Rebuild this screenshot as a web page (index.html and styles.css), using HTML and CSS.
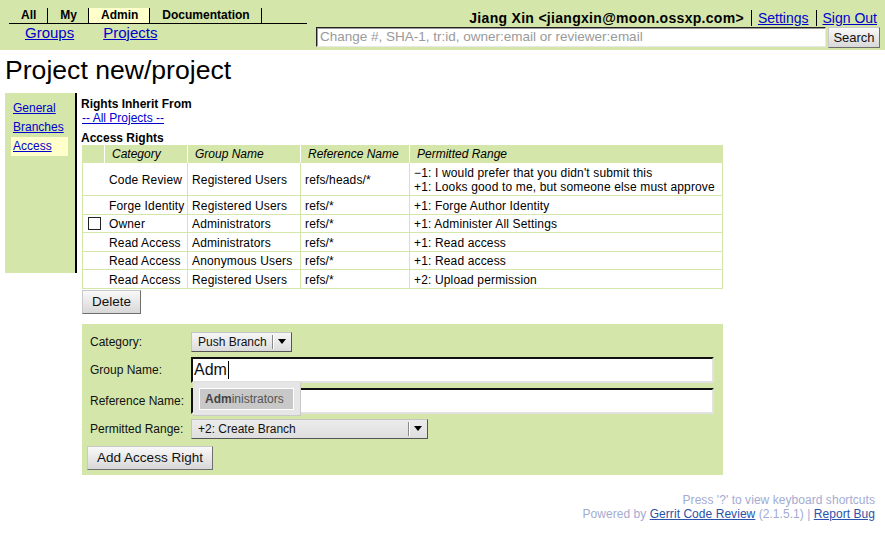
FILE: index.html
```html
<!DOCTYPE html>
<html>
<head>
<meta charset="utf-8">
<title>Project new/project</title>
<link rel="stylesheet" href="styles.css">
</head>
<body>
<div class="header">
  <div class="hleft">
    <div class="tabs">
      <span class="tab">All</span><span class="tab">My</span><span class="tab sel">Admin</span><span class="tab">Documentation</span>
    </div>
    <div class="sublinks"><a href="#">Groups</a><a href="#">Projects</a></div>
  </div>
  <div class="hright">
    <div class="userline"><span class="user">Jiang Xin &lt;jiangxin@moon.ossxp.com&gt;</span><span class="sep"></span><a href="#">Settings</a><span class="sep"></span><a href="#">Sign Out</a></div>
    <div class="searchrow">
      <div class="searchbox">Change #, SHA-1, tr:id, owner:email or reviewer:email</div>
      <button class="btn search">Search</button>
    </div>
  </div>
</div>

<h1 class="title">Project new/project</h1>

<div class="main">
  <div class="nav">
    <div class="navitem"><a href="#">General</a></div>
    <div class="navitem"><a href="#">Branches</a></div>
    <div class="navitem sel"><a href="#">Access</a></div>
  </div>
  <div class="content">
    <div class="sect">Rights Inherit From</div>
    <div class="inherit"><a href="#">-- All Projects --</a></div>
    <div class="sect sect2">Access Rights</div>
    <table class="rights">
      <colgroup><col class="w0"><col class="w1"><col class="w2"><col class="w3"><col class="w4"></colgroup>
      <tr><th class="c0"></th><th>Category</th><th>Group Name</th><th>Reference Name</th><th class="last">Permitted Range</th></tr>
      <tr><td class="c0"></td><td>Code Review</td><td>Registered Users</td><td>refs/heads/*</td><td>−1: I would prefer that you didn't submit this<br>+1: Looks good to me, but someone else must approve</td></tr>
      <tr><td class="c0"></td><td>Forge Identity</td><td>Registered Users</td><td>refs/*</td><td>+1: Forge Author Identity</td></tr>
      <tr><td class="c0"><span class="check"></span></td><td>Owner</td><td>Administrators</td><td>refs/*</td><td>+1: Administer All Settings</td></tr>
      <tr><td class="c0"></td><td>Read Access</td><td>Administrators</td><td>refs/*</td><td>+1: Read access</td></tr>
      <tr><td class="c0"></td><td>Read Access</td><td>Anonymous Users</td><td>refs/*</td><td>+1: Read access</td></tr>
      <tr><td class="c0"></td><td>Read Access</td><td>Registered Users</td><td>refs/*</td><td>+2: Upload permission</td></tr>
    </table>
    <button class="btn delete">Delete</button>

    <div class="addpanel">
      <div class="frow">
        <div class="flabel">Category:</div>
        <div class="combo small"><span class="ctext">Push Branch</span><span class="carrow"><span class="tri"></span></span></div>
      </div>
      <div class="frow">
        <div class="flabel">Group Name:</div>
        <div class="fieldwrap">
          <div class="tinput"><span class="typed">Adm</span><span class="caret"></span></div>
          <div class="suggest"><div class="sitem"><b>Adm</b>inistrators</div></div>
        </div>
      </div>
      <div class="frow">
        <div class="flabel">Reference Name:</div>
        <div class="tinput"></div>
      </div>
      <div class="frow">
        <div class="flabel">Permitted Range:</div>
        <div class="combo wide"><span class="ctext">+2: Create Branch</span><span class="carrow"><span class="tri"></span></span></div>
      </div>
      <div class="frow brow">
        <button class="btn addbtn">Add Access Right</button>
      </div>
    </div>
  </div>
</div>

<div class="footer">
  <div>Press '?' to view keyboard shortcuts</div>
  <div>Powered by <a href="#">Gerrit Code Review</a> (2.1.5.1) | <a href="#">Report Bug</a></div>
</div>
</body>
</html>
```

FILE: styles.css
```css
* { box-sizing: border-box; }
html, body { margin: 0; padding: 0; }
body {
  font-family: "Liberation Sans", Arial, sans-serif;
  font-size: 12px;
  color: #000;
  background: #fff;
  width: 885px;
}
a { color: #0000cc; text-decoration: underline; }

/* header */
.header {
  display: flex;
  justify-content: space-between;
  height: 50px;
  background: #d4e6a9;
}
.hleft { padding: 8px 0 0 9px; }
.tabs {
  display: flex;
  width: 298px;
  height: 16px;
  border-bottom: 1px solid #000;
}
.tab {
  font-weight: bold;
  font-size: 12px;
  line-height: 15px;
  height: 15px;
  padding: 0 11px 0 12px;
  border-right: 1px solid #000;
}
.tab.sel { background: #ffffcc; }
.sublinks {
  display: flex;
  gap: 29px;
  padding-left: 16px;
  font-size: 15px;
  line-height: 17px;
}
.hright {
  display: flex;
  flex-direction: column;
  align-items: flex-end;
  padding: 9px 5px 0 0;
}
.userline {
  display: flex;
  align-items: center;
  font-size: 14px;
  line-height: 16px;
  height: 17px;
  margin-right: 3px;
}
.user { font-weight: bold; letter-spacing: 0.3px; }
.sep {
  width: 1px;
  height: 16px;
  background: #000;
  margin: 0 6px 0 7px;
}
.searchrow { display: flex; gap: 2px; margin-top: 1px; }
.searchbox {
  width: 510px;
  height: 20px;
  background: #fff;
  border: 1px solid;
  border-color: #222 #e8e8e8 #e8e8e8 #222;
  box-shadow: inset 1px 1px 0 #9a9a9a;
  color: #9a9a9a;
  font-size: 13.5px;
  line-height: 18px;
  padding-left: 3px;
  white-space: nowrap;
  overflow: hidden;
}
.btn {
  font-family: "Liberation Sans", Arial, sans-serif;
  background: linear-gradient(#f9f9f9, #d8d8d8);
  border: 1px solid;
  border-color: #c9c9c9 #6f6f6f #6f6f6f #c9c9c9;
  color: #111;
  padding: 0;
  margin: 0;
}
.search { width: 52px; height: 21px; font-size: 13px; }

/* title */
.title {
  margin: 5px 0 0 5px;
  font-size: 26.6px;
  font-weight: normal;
  line-height: 30px;
}

/* main */
.main {
  display: flex;
  align-items: flex-start;
  margin-top: 8px;
  padding-left: 5px;
}
.nav {
  width: 72px;
  height: 180px;
  background: #d4e6a9;
  border-right: 2px solid #000;
  padding: 6px 0 0 6px;
}
.navitem {
  width: 57px;
  padding: 2px 0 3px 2px;
  line-height: 14px;
}
.navitem.sel { background: #ffffcc; }

.content {
  margin-left: 5px;
  padding-top: 4px;
  width: 641px;
}
.sect { font-weight: bold; line-height: 14px; margin-left: -1px; }
.sect2 { margin-top: 6px; }
.inherit { line-height: 14px; }

.rights {
  border-collapse: separate;
  border-spacing: 0;
  table-layout: fixed;
  width: 641px;
}
.w0 { width: 23px; }
.w1 { width: 83px; }
.w2 { width: 113px; }
.w3 { width: 109px; }
.w4 { width: 313px; }
.rights th, .rights td {
  text-align: left;
  vertical-align: middle;
  font-size: 12px;
  line-height: 14.4px;
  white-space: nowrap;
  overflow: hidden;
}
.rights th {
  background: #d4e6a9;
  font-weight: normal;
  font-style: italic;
  padding: 2px 7px 1.6px;
  border-right: 1px solid #fff;
}
.rights th.c0 { border-left: 1px solid #d4e6a9; padding: 0; }
.rights th.last { border-right-color: #d4e6a9; }
.rights td {
  padding: 2.6px 4px 0.6px 4px;
  letter-spacing: 0.15px;
  border-right: 1px solid #d4e6a9;
  border-bottom: 1px solid #d4e6a9;
}
.rights td.c0 {
  border-left: 1px solid #d4e6a9;
  border-right: none;
  padding: 0 0 0 5px;
}
.check {
  display: block;
  width: 13px;
  height: 13px;
  border: 1px solid #222;
  background: #fff;
}

.delete {
  display: block;
  margin-top: 1px;
  height: 24px;
  width: 59px;
  font-size: 13.5px;
}

/* add panel */
.addpanel {
  margin-top: 10px;
  width: 641px;
  background: #d4e6a9;
  padding: 8px 8px 5px 5px;
  display: flex;
  flex-direction: column;
  gap: 5px;
}
.frow { display: flex; align-items: center; }
.brow { margin-top: 2px; }
.flabel {
  width: 104px;
  padding-left: 3px;
  color: #111;
  white-space: nowrap;
}
.combo {
  display: flex;
  align-items: center;
  height: 20px;
  border: 1px solid;
  border-color: #c4c4c4 #555 #555 #c4c4c4;
  font-size: 12px;
  color: #111;
}
.combo.small {
  width: 101px;
  background: linear-gradient(#f6f6f6, #dcdcdc);
}
.combo.wide {
  width: 237px;
  background: linear-gradient(#ececec, #dedede);
}
.ctext { flex: 1; padding-left: 6px; white-space: nowrap; }
.carrow {
  display: flex;
  align-items: center;
  justify-content: center;
  width: 19px;
  height: 14px;
  border-left: 1px solid #8a8a8a;
  box-shadow: inset 1px 0 0 #fff;
}
.tri {
  width: 0;
  height: 0;
  border-left: 4px solid transparent;
  border-right: 4px solid transparent;
  border-top: 5px solid #000;
}
.fieldwrap { position: relative; }
.tinput {
  width: 523px;
  height: 26px;
  background: #fff;
  border-style: solid;
  border-width: 2px;
  border-color: #111 #e2e2e2 #e2e2e2 #111;
  display: flex;
  align-items: center;
  padding-left: 1px;
}
.typed { font-size: 16px; color: #111; }
.caret {
  width: 1px;
  height: 18px;
  background: #000;
  margin-left: 1px;
}
.suggest {
  position: absolute;
  left: 2px;
  top: 26px;
  width: 108px;
  height: 33px;
  background: #e6e6e6;
  border-right: 1px solid #c8c8c8;
  border-bottom: 1px solid #c8c8c8;
  padding: 5px 0 0 6px;
}
.sitem {
  width: 95px;
  height: 22px;
  background: #c8c8c8;
  border: 1px solid #fff;
  color: #555;
  line-height: 20px;
  padding-left: 5px;
  white-space: nowrap;
}
.sitem b { color: #444; }
.addbtn {
  width: 126px;
  height: 24px;
  font-size: 13.5px;
}

/* footer */
.footer {
  margin-top: 18px;
  padding-right: 10px;
  text-align: right;
  color: #a3abd1;
  line-height: 14px;
  font-size: 12px;
  letter-spacing: 0.05px;
}
.footer a { color: #2a52a8; }
```
